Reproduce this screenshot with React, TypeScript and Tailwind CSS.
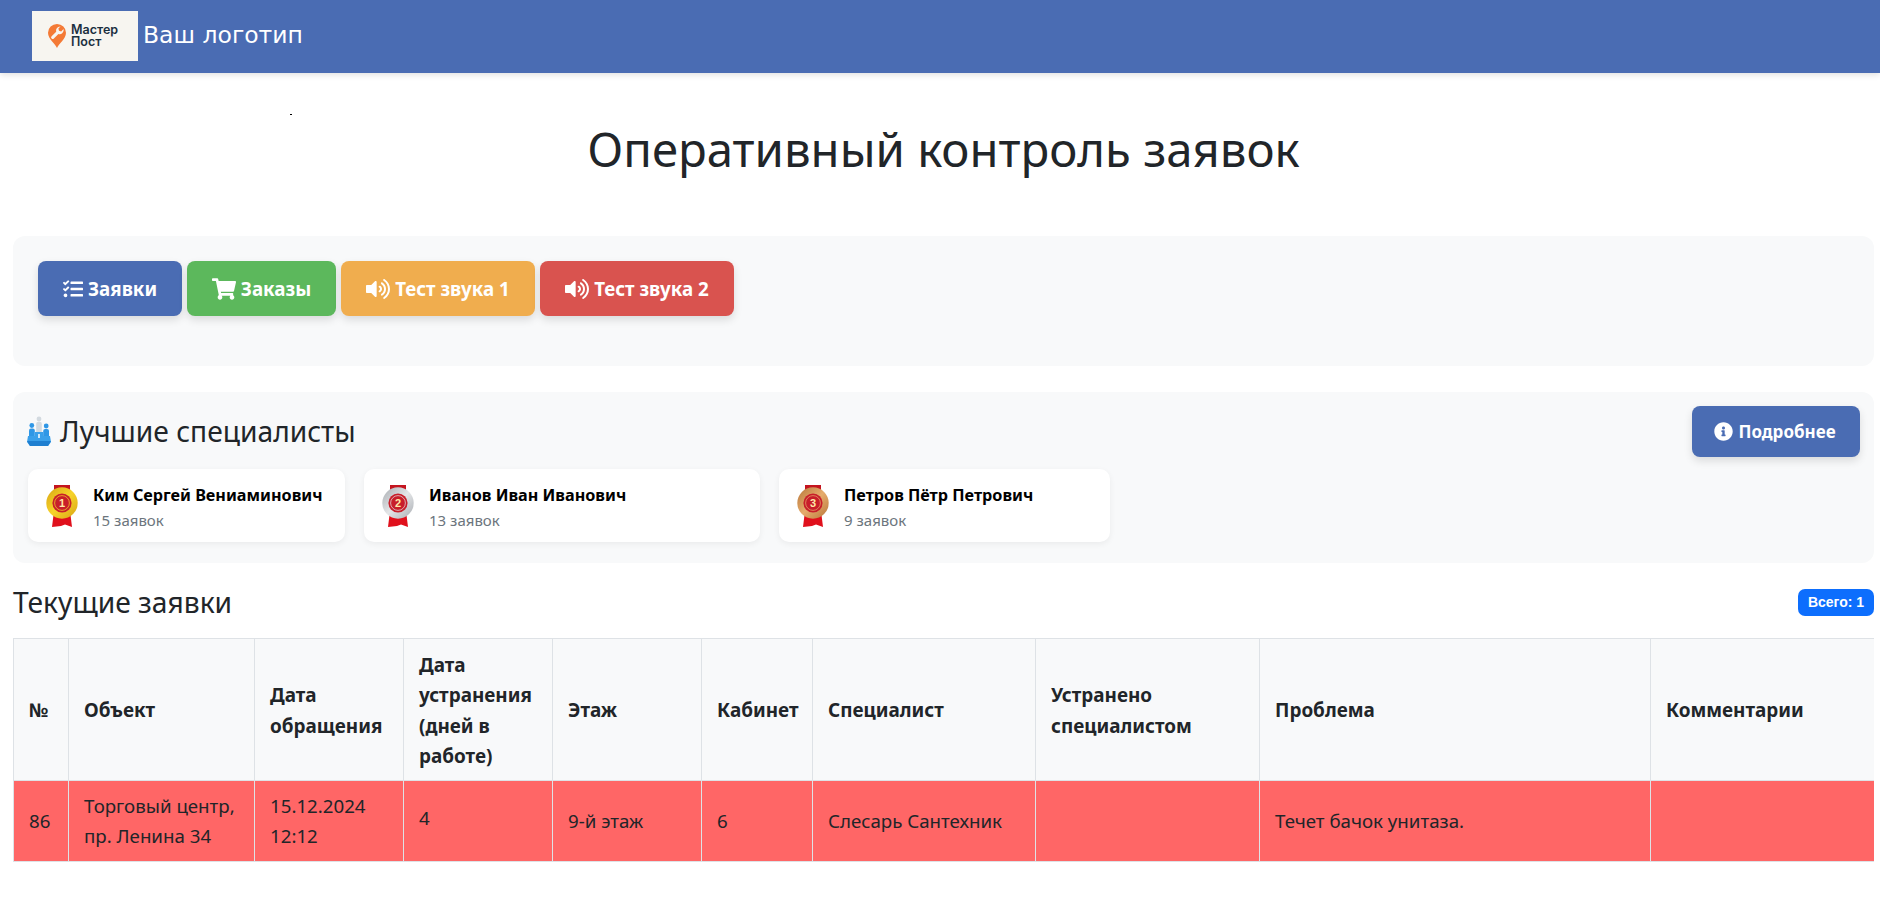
import { FaTasks, FaShoppingCart, FaVolumeUp, FaInfoCircle } from "react-icons/fa";

function LogoMark() {
  return (
    <svg viewBox="0 0 18 24" className="h-[24px] w-[18px] shrink-0">
      <path d="M9 24 C7.5 20 0 15 0 8.8 A9 8.8 0 0 1 18 8.8 C18 15 10.5 20 9 24Z" fill="#f47a36" />
      <path d="M12.6 2.4 a4.2 4.2 0 0 0 -4.4 5.4 L3.6 12.2 a1.6 1.6 0 0 0 2.3 2.3 L10.4 10 a4.2 4.2 0 0 0 5.2 -5 l-2.4 2.4 -2.2 -.6 -.6 -2.2 2.4 -2.4Z" fill="#f7f5f0" />
    </svg>
  );
}

function Podium() {
  return (
    <svg viewBox="0 0 24 30" className="h-[30px] w-[24px] shrink-0">
      <circle cx="12" cy="3" r="2.4" fill="#d3dae0" />
      <rect x="9.2" y="5.8" width="5.6" height="12" rx="2" fill="#d3dae0" />
      <circle cx="4.8" cy="9.5" r="2.4" fill="#2f97e6" />
      <rect x="2" y="12.5" width="5.8" height="9" rx="2" fill="#2f97e6" />
      <circle cx="19.2" cy="10" r="2.4" fill="#2f97e6" />
      <rect x="16.2" y="13" width="5.8" height="9" rx="2" fill="#2f97e6" />
      <path d="M8 16h8l.5 4H23l1 6-3 4H3L0 26l1-6h7z" fill="#3aa0ea" />
      <path d="M0 25h24l-3 5H3z" fill="#1f7fd0" />
      <path d="M11 18h2v4h-2z" fill="#cfe8fb" />
    </svg>
  );
}

function Medal({ n, a, b, id }: { n: string; a: string; b: string; id: string }) {
  return (
    <svg viewBox="0 0 32 42" className="h-[42px] w-[32px] shrink-0">
      <defs>
        <linearGradient id={id} x1="0" y1="0" x2="1" y2="1">
          <stop offset="0" stopColor={b} />
          <stop offset="0.5" stopColor={a} />
          <stop offset="1" stopColor={b} />
        </linearGradient>
      </defs>
      <path d="M8 0h16v6H8z" fill="#c4141f" />
      <path d="M8 26h16l2 16-7-2.5-4 1.5-9 1z" fill="#e0101c" />
      <circle cx="16" cy="18" r="15.7" fill={`url(#${id})`} />
      <circle cx="16" cy="18" r="9.6" fill="#c81e2a" />
      <circle cx="16" cy="18" r="7.4" fill="none" stroke={a} strokeWidth="0.7" />
      <text x="16" y="22" textAnchor="middle" fontSize="11" fontWeight="700" fill="#ffe9a8" fontFamily="'Liberation Sans', sans-serif">{n}</text>
    </svg>
  );
}

function Btn({ color, icon, label, w }: { color: string; icon: React.ReactNode; label: string; w: string }) {
  return (
    <div className={`flex h-[55px] items-center justify-center gap-[5px] rounded-lg text-[18.8px] font-bold text-white shadow-[0_4px_8px_rgba(0,0,0,0.12)] ${color} ${w}`}>
      {icon}
      <span className="pt-[2px]">{label}</span>
    </div>
  );
}

function Card({ w, name, count, medal }: { w: string; name: string; count: string; medal: React.ReactNode }) {
  return (
    <div className={`flex h-[73px] items-center gap-[15px] rounded-[10px] bg-white pl-[18px] shadow-[0_2px_6px_rgba(0,0,0,0.06)] ${w}`}>
      {medal}
      <div className="flex flex-col pt-[3px]">
        <span className="text-[16.2px] leading-[26px] font-bold text-black">{name}</span>
        <span className="text-[15px] leading-[24px] text-[#6c757d]">{count}</span>
      </div>
    </div>
  );
}

const heads: [string, string][] = [
  ["№", "w-[55px]"],
  ["Объект", "w-[186px]"],
  ["Дата обращения", "w-[149px]"],
  ["Дата устранения (дней в работе)", "w-[149px]"],
  ["Этаж", "w-[149px]"],
  ["Кабинет", "w-[111px]"],
  ["Специалист", "w-[223px]"],
  ["Устранено специалистом", "w-[224px]"],
  ["Проблема", "w-[391px]"],
  ["Комментарии", "w-[300px]"],
];

const cells = ["86", "Торговый центр, пр. Ленина 34", "15.12.2024 12:12", "4", "9-й этаж", "6", "Слесарь Сантехник", "", "Течет бачок унитаза.", ""];

export default function App() {
  return (
    <div className="relative min-h-[922px] bg-white font-['Noto_Sans','Open_Sans',sans-serif] text-[#212529]">
      <header className="flex h-[73px] items-start bg-[#4a6cb3] pl-[32px] shadow-[0_2px_6px_rgba(0,0,0,0.12)]">
        <div className="mt-[11px] flex h-[50px] w-[106px] items-center gap-[5px] bg-[#f7f5f0] pl-[16px]">
          <LogoMark />
          <span className="font-['Inter',sans-serif] text-[12.5px] leading-[12px] font-semibold text-[#1b2f3f]">Мастер<br />Пост</span>
        </div>
        <span className="mt-[18px] ml-[5px] font-['DejaVu_Sans',sans-serif] text-[23.5px] text-white">Ваш логотип</span>
      </header>
      <div className="absolute top-[114px] left-[290px] h-[1px] w-[2px] bg-black" />

      <div className="pt-[44px] pr-[6px] pl-[13px]">
        <h1 className="mb-[55px] text-center text-[47.3px] leading-[64px] font-normal">Оперативный контроль заявок</h1>

        <section className="flex h-[130px] gap-[5px] rounded-xl bg-[#f8f9fa] pt-[25px] pl-[25px]">
          <Btn color="bg-[#4a6cb3]" w="w-[144px]" label="Заявки" icon={<FaTasks className="text-[20px]" />} />
          <Btn color="bg-[#5cb85c]" w="w-[149px]" label="Заказы" icon={<FaShoppingCart className="text-[24px]" />} />
          <Btn color="bg-[#f0ad4e]" w="w-[194px]" label="Тест звука 1" icon={<FaVolumeUp className="text-[24px]" />} />
          <Btn color="bg-[#d9534f]" w="w-[194px]" label="Тест звука 2" icon={<FaVolumeUp className="text-[24px]" />} />
        </section>

        <section className="mt-[26px] h-[171px] rounded-xl bg-[#f8f9fa] px-[14px] pt-[14px]">
          <div className="flex items-start justify-between">
            <div className="flex h-[50px] items-center gap-[9px]">
              <Podium />
              <h2 className="text-[28.2px] leading-[36px] font-normal">Лучшие специалисты</h2>
            </div>
            <div className="flex h-[51px] w-[168px] items-center justify-center gap-[5px] rounded-lg bg-[#4a6cb3] text-[17px] font-bold text-white shadow-[0_4px_8px_rgba(0,0,0,0.12)]">
              <FaInfoCircle className="text-[19px]" />
              <span className="pr-[2px]">Подробнее</span>
            </div>
          </div>
          <div className="mt-[12px] flex gap-[19px] pl-[1px]">
            <Card w="w-[317px]" name="Ким Сергей Вениаминович" count="15 заявок" medal={<Medal id="m1" n="1" a="#f6d32a" b="#d9a514" />} />
            <Card w="w-[396px]" name="Иванов Иван Иванович" count="13 заявок" medal={<Medal id="m2" n="2" a="#e4e6e8" b="#a9adb2" />} />
            <Card w="w-[331px]" name="Петров Пётр Петрович" count="9 заявок" medal={<Medal id="m3" n="3" a="#e6ac6c" b="#b8763a" />} />
          </div>
        </section>

        <div className="mt-[20px] flex items-center justify-between">
          <h3 className="text-[28.2px] leading-[38px] font-normal">Текущие заявки</h3>
          <span className="flex h-[27px] w-[76px] items-center justify-center rounded-[7px] bg-[#0d6efd] font-['Liberation_Sans',sans-serif] text-[14px] font-bold text-white">Всего: 1</span>
        </div>

        <div className="mt-[17px] overflow-hidden">
          <table className="w-[1937px] table-fixed border-collapse text-[18.7px] leading-[30px]">
            <thead>
              <tr className="bg-[#f8f9fa]">
                {heads.map(([h, w]) => (
                  <th key={h} className={`border border-[#dee2e6] px-[15px] pt-[11px] pb-[9px] text-left align-middle text-[18.9px] leading-[30.3px] font-bold ${w}`}>{h}</th>
                ))}
              </tr>
            </thead>
            <tbody>
              <tr className="bg-[#ff6666]">
                {cells.map((c, i) => (
                  <td key={i} className={`h-[81px] border border-[#dee2e6] px-[15px] py-[9px] text-left align-middle ${c === "4" ? "pb-[15px]" : ""}`}>{c}</td>
                ))}
              </tr>
            </tbody>
          </table>
        </div>
      </div>
    </div>
  );
}
